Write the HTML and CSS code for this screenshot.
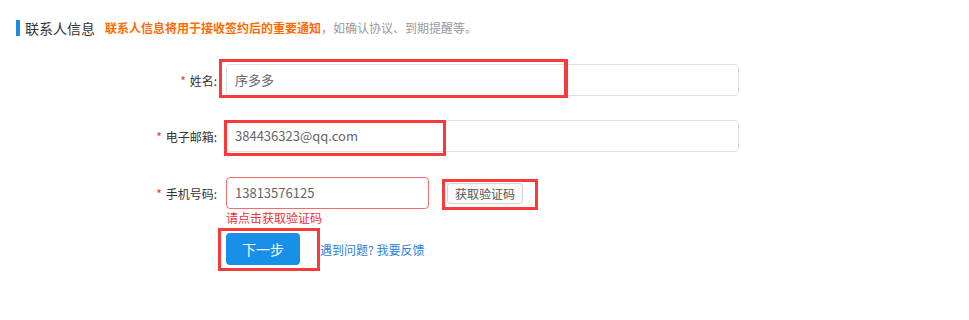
FILE: index.html
```html
<!DOCTYPE html>
<html lang="zh-CN">
<head>
  <meta charset="UTF-8">
  <title>联系人信息</title>
  <link rel="stylesheet" href="styles.css">
</head>
<body>

<div class="page">
  <div class="section-title">
    <span class="bar"></span>
    <h2>联系人信息</h2>
    <span class="note"><strong>联系人信息将用于接收签约后的重要通知</strong>，如确认协议、到期提醒等。</span>
  </div>

  <form class="contact-form">
    <div class="form-row">
      <label><em>*</em> 姓名:</label>
      <div class="input-box">序多多</div>
    </div>

    <div class="form-row row-mail">
      <label><em>*</em> 电子邮箱:</label>
      <div class="input-box">384436323@qq.com</div>
    </div>

    <div class="form-row row-phone">
      <label><em>*</em> 手机号码:</label>
      <div class="input-box phone error">13813576125</div>
      <button type="button" class="code-btn">获取验证码</button>
    </div>
    <div class="error-msg">请点击获取验证码</div>

    <div class="actions">
      <button type="button" class="next-btn">下一步</button>
      <a href="#" class="help-link">遇到问题? 我要反馈</a>
    </div>
  </form>

  <!-- review marks -->
  <div class="mark mark-name"></div>
  <div class="mark mark-mail"></div>
  <div class="mark mark-code"></div>
  <div class="mark mark-next"></div>
</div>

</body>
</html>
```

FILE: styles.css
```css
body {
  margin: 0;
  padding: 0;
  background-color: #fff;
  font-family: "Noto Sans CJK SC", "Microsoft YaHei", sans-serif;
  color: #333;
}

.page {
  position: relative;
  width: 969px;
  height: 320px;
}

.section-title {
  display: flex;
  align-items: center;
  padding: 20px 0 0 16px;
  height: 16px;
}

.section-title .bar {
  width: 4px;
  height: 16px;
  background-color: #1a8be6;
}

.section-title h2 {
  margin: 0 0 0 5px;
  font-size: 14px;
  font-weight: normal;
  line-height: 16px;
  color: #333;
}

.section-title .note {
  margin-left: 10px;
  font-size: 12px;
  line-height: 16px;
  color: #999;
}

.section-title .note strong {
  color: #ff6a00;
}

.contact-form {
  margin-top: 28px;
}

.form-row {
  display: flex;
  align-items: center;
  height: 32px;
  margin-bottom: 24px;
}

.row-mail {
  margin-bottom: 25px;
}

.row-phone {
  margin-bottom: 0;
}

.form-row label {
  box-sizing: border-box;
  width: 226px;
  padding-right: 9px;
  text-align: right;
  font-size: 12px;
  color: #333;
}

.form-row label em {
  font-style: normal;
  color: #e4393c;
  margin-right: 1px;
}

.input-box {
  box-sizing: border-box;
  width: 513px;
  height: 32px;
  padding: 0 8px;
  border: 1px solid #dcdfe6;
  border-radius: 4px;
  font-size: 13px;
  line-height: 30px;
  color: #666;
}

.input-box.phone {
  width: 203px;
}

.input-box.error {
  border-color: #f56c6c;
}

.code-btn {
  box-sizing: border-box;
  margin-left: 18px;
  width: 76px;
  height: 21px;
  padding: 0;
  background-color: #fafafa;
  border: 1px solid #d4d4d4;
  border-radius: 3px;
  font-family: inherit;
  font-size: 12px;
  line-height: 19px;
  color: #555;
}

.error-msg {
  margin-left: 226px;
  height: 18px;
  font-size: 12px;
  line-height: 18px;
  color: #f23030;
}

.actions {
  display: flex;
  align-items: center;
  margin: 6px 0 0 226px;
}

.next-btn {
  width: 74px;
  height: 32px;
  border: none;
  border-radius: 4px;
  background-color: #1890e8;
  color: #fff;
  font-family: inherit;
  font-size: 14px;
  cursor: pointer;
}

.help-link {
  margin-left: 20px;
  font-size: 12px;
  color: #2b7fd9;
  text-decoration: none;
}

.mark {
  position: absolute;
  box-sizing: border-box;
  border: 3px solid #f83a3a;
}

.mark-name {
  left: 219px;
  top: 59px;
  width: 349px;
  height: 39px;
  border-right-width: 4px;
}

.mark-mail {
  left: 224px;
  top: 120px;
  width: 222px;
  height: 36px;
}

.mark-code {
  left: 442px;
  top: 179px;
  width: 96px;
  height: 31px;
}

.mark-next {
  left: 218px;
  top: 228px;
  width: 102px;
  height: 43px;
}
```
